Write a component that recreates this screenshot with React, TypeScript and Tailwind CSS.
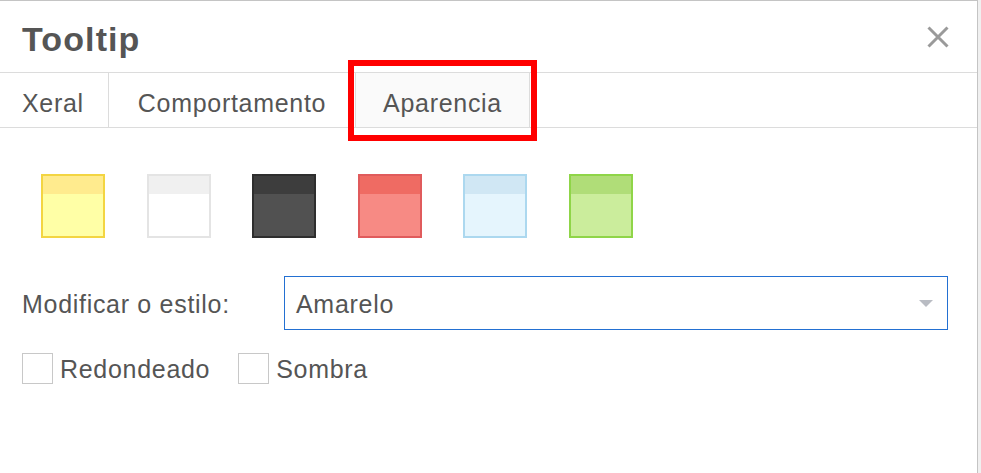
import React from 'react';

const swatches = [
  { name: 'Amarelo', top: 'bg-[#ffeb8e]', body: 'bg-[#ffffa6]', border: 'border-[#f3d542]' },
  { name: 'Branco', top: 'bg-[#f0f0f0]', body: 'bg-white', border: 'border-[#e4e4e4]' },
  { name: 'Escuro', top: 'bg-[#3d3d3d]', body: 'bg-[#515151]', border: 'border-[#2e2e2e]' },
  { name: 'Vermello', top: 'bg-[#ef6b63]', body: 'bg-[#f78a84]', border: 'border-[#e05b5c]' },
  { name: 'Azul', top: 'bg-[#d0e7f4]', body: 'bg-[#e5f5fd]', border: 'border-[#acd8ef]' },
  { name: 'Verde', top: 'bg-[#b0dd78]', body: 'bg-[#cbed9c]', border: 'border-[#8fd548]' },
];

const App: React.FC = () => {
  return (
    <div className="relative w-[981px] h-[473px] overflow-hidden bg-[#f0f0f0] font-['Liberation_Sans',Arial,sans-serif] text-[#555555]">
      <div className="w-[978px] h-full bg-white border-t border-r border-[#c4c4c4]">
        {/* header */}
        <div className="h-[72px] flex items-center justify-between pl-[22px] pr-[27px] border-b border-[#dcdcdc]">
          <h1 className="text-[34px] font-bold tracking-[1.1px] leading-none pt-[4px]">Tooltip</h1>
          <button className="w-[24px] h-[24px] flex items-center justify-center" title="Pechar">
            <svg width="22" height="22" viewBox="0 0 22 22">
              <path d="M1.5 1.5 L20.5 20.5 M20.5 1.5 L1.5 20.5" stroke="#9a9a9a" strokeWidth="3" />
            </svg>
          </button>
        </div>

        {/* tabs */}
        <div className="flex h-[55px] border-b border-[#dcdcdc] text-[25px] tracking-[0.7px]">
          <div className="w-[109px] flex items-center pl-[22px] border-r border-[#dcdcdc] pt-[8px]">Xeral</div>
          <div className="w-[246px] flex items-center justify-center pt-[8px]">Comportamento</div>
          <div className="w-[175px] flex items-center justify-center bg-[#fafafa] border-x border-[#dcdcdc] pt-[8px]">Aparencia</div>
        </div>

        {/* body */}
        <div className="px-[22px] pt-[46px]">
          <div className="flex gap-[41.6px] pl-[19px]">
            {swatches.map((s) => (
              <div key={s.name} className={`w-[64px] h-[64px] border-2 ${s.border} ${s.body} flex flex-col`} title={s.name}>
                <div className={`h-[18px] ${s.top}`} />
              </div>
            ))}
          </div>

          <div className="flex items-center mt-[38px] text-[25px] tracking-[0.7px]">
            <label className="w-[262px] pt-[4px]">Modificar o estilo:</label>
            <div className="w-[664px] h-[54px] border border-[#2370d2] flex items-center justify-between pl-[11px] pr-[14px]">
              <span className="pt-[4px]">Amarelo</span>
              <svg width="14" height="7" viewBox="0 0 14 7">
                <path d="M0 0 H14 L7 7 Z" fill="#b9bcc3" />
              </svg>
            </div>
          </div>

          <div className="flex items-center mt-[19px] text-[25px] tracking-[0.7px]">
            <span className="w-[31px] h-[31px] border border-[#c8c8c8] bg-white" />
            <span className="ml-[7px] pt-[2px]">Redondeado</span>
            <span className="w-[31px] h-[31px] border border-[#c8c8c8] bg-white ml-[28px]" />
            <span className="ml-[7px] pt-[2px]">Sombra</span>
          </div>
        </div>
      </div>

      {/* highlight box */}
      <div className="absolute left-[348px] top-[60px] w-[189px] h-[81px] border-[6px] border-[#ff0000]" />
    </div>
  );
};

export default App;
